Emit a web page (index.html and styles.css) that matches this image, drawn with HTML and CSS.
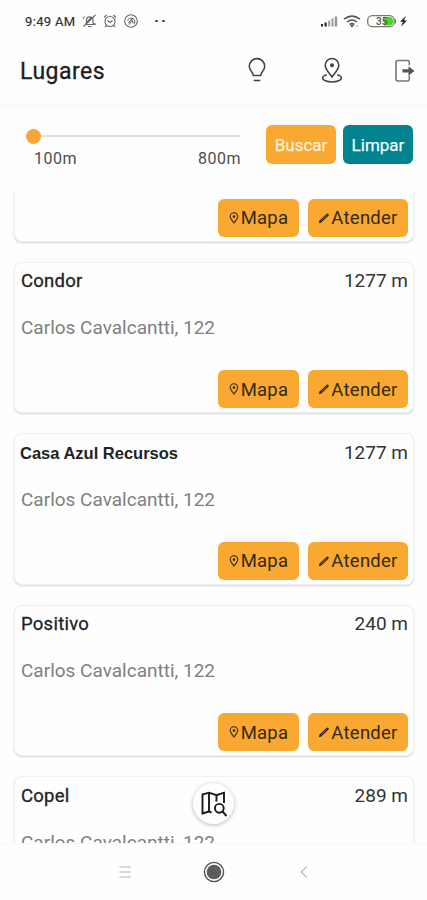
FILE: index.html
```html
<!DOCTYPE html>
<html lang="pt-BR">
<head>
<meta charset="utf-8">
<title>Lugares</title>
<link rel="stylesheet" href="styles.css">
</head>
<body>
<svg class="defs" width="0" height="0">
  <symbol id="pin" viewBox="0 0 10 12"><path d="M5 11C3.200 8.700 1.200 6.600 1.200 4.600a3.800 3.800 0 0 1 7.600 0C8.800 6.600 6.800 8.700 5 11Z" fill="none" stroke="currentColor" stroke-width="1.100"/><circle cx="5" cy="4.600" r="1.300" fill="currentColor"/></symbol>
  <symbol id="pencil" viewBox="0 0 12 12"><path d="M.8 11.200 1.500 8.500 8.500 1.900q1-.8 1.900 0t0 1.800L3.400 10.400Z" fill="currentColor"/><path d="M3.500 8.500 8.300 3.900" stroke="#f9a931" stroke-width=".5"/></symbol>
</svg>
<div class="screen">
  <div class="status">
    <span class="time">9:49 AM</span>
    <svg class="s-icons" width="58" height="16" viewBox="0 0 58 16" fill="none" stroke="#666" stroke-width="1.100">
      <path d="M3.500 11.500h8.500l-1-1.600V6.500a3.400 3.400 0 0 0-6.600 0v3.400ZM6 13.500h3.500M1.500 13.500 13.500 2M1 5.500l1.500-2M12.500 10.500l1.500 1M4 10l5-5"/>
      <circle cx="28" cy="8.500" r="5"/><path d="m25.500 7.500 2.500 2 2.500-2M22 4.500 24.500 2M31.500 2 34 4.500M24.500 12.500 23 14M31.500 12.500l1.500 1.500"/>
      <circle cx="49" cy="8" r="6.300"/><path d="M45.500 7.500a3.800 3.800 0 0 1 7 3M46.500 10l3-3.500 2 4M49.500 8.500l-2.500 3"/>
    </svg>
    <span class="dots"><i></i><i></i></span>
    <svg class="s-right" width="88" height="16" viewBox="0 0 88 16">
      <path d="M0 11h2v2.500H0zM3.500 9.500h2.200v4H3.500z" fill="#222"/><path d="M7.200 7.500h2v6h-2zM10.500 5.500h2v8h-2zM13.700 3.500h2.500v10h-2.500z" fill="#999"/>
      <g fill="none" stroke="#555" stroke-width="1.600"><path d="M23 6.200q8-6.200 16 0M26 9q5-4 10 0M28.700 11.500q2.300-1.800 4.600 0"/></g><path d="m31 14.500-2-2.200h4z" fill="#333"/><path d="M35 13h2.500" stroke="#aaa"/>
      <rect x="46.700" y="2.700" width="26.500" height="11" rx="4.500" fill="#fff" stroke="#777" stroke-width="1.300"/><path d="M63 4h5.500q3.500 0 3.500 4.200t-3.500 4.200H63Z" fill="#48d51b"/><path d="M74.500 6v4.500" stroke="#777"/>
      <text x="55" y="12" class="battery">35</text>
      <path d="m85 2.700-6 6.100h3l-2 5 6-6.300h-3Z" fill="#222"/>
    </svg>
  </div>
  <header class="header">
    <h1>Lugares</h1>
    <div class="actions">
      <svg width="20" height="28" viewBox="0 0 20 28" fill="none" stroke="#444" stroke-width="1.600"><path d="M6.300 18.500c0-3.600-4-4.500-4-9.200a7.700 7.700 0 0 1 15.400 0c0 4.700-4 5.600-4 9.200ZM6.700 23.500h6.600"/></svg>
      <svg width="24" height="28" viewBox="0 0 24 28" fill="none" stroke="#444" stroke-width="1.600"><path d="M12 20C8.500 15.500 5.200 12 5.200 8.300a6.800 6.800 0 0 1 13.600 0C18.800 12 15.500 15.500 12 20Z"/><circle cx="12" cy="8.300" r="2" fill="#444" stroke="none"/><path d="M6.800 17.800C4.200 18.500 2.600 19.600 2.600 21c0 2.200 4.200 4 9.400 4s9.400-1.800 9.400-4c0-1.400-1.600-2.500-4.200-3.200"/></svg>
      <svg width="22" height="28" viewBox="0 0 22 28" fill="none"><path d="M16.300 8.200V5.500q0-2-2-2H5q-2 0-2 2v16.500q0 2 2 2h9.300q2 0 2-2v-3.500" stroke="#777" stroke-width="1.600"/><path d="M9.500 12.300h6V9.200l6 4.800-6 4.700v-3.100h-6Z" fill="#555"/></svg>
    </div>
  </header>
  <section class="filter">
    <div class="slider">
      <div class="track"><span class="knob"></span><span class="rail"></span></div>
      <div class="range"><span>100m</span><span>800m</span></div>
    </div>
    <button class="btn search">Buscar</button>
    <button class="btn clear">Limpar</button>
  </section>
  <main class="list">
    <article class="card">
      <div class="foot"><button class="btn map"><svg width="10" height="12"><use href="#pin"/></svg><span>Mapa</span></button><button class="btn attend"><svg width="12" height="12"><use href="#pencil"/></svg><span>Atender</span></button></div>
    </article>
    <article class="card">
      <div class="top"><h2>Condor</h2><span>1277 m</span></div>
      <p>Carlos Cavalcantti, 122</p>
      <div class="foot"><button class="btn map"><svg width="10" height="12"><use href="#pin"/></svg><span>Mapa</span></button><button class="btn attend"><svg width="12" height="12"><use href="#pencil"/></svg><span>Atender</span></button></div>
    </article>
    <article class="card">
      <div class="top"><h2 class="edited">Casa Azul Recursos</h2><span>1277 m</span></div>
      <p>Carlos Cavalcantti, 122</p>
      <div class="foot"><button class="btn map"><svg width="10" height="12"><use href="#pin"/></svg><span>Mapa</span></button><button class="btn attend"><svg width="12" height="12"><use href="#pencil"/></svg><span>Atender</span></button></div>
    </article>
    <article class="card">
      <div class="top"><h2>Positivo</h2><span>240 m</span></div>
      <p>Carlos Cavalcantti, 122</p>
      <div class="foot"><button class="btn map"><svg width="10" height="12"><use href="#pin"/></svg><span>Mapa</span></button><button class="btn attend"><svg width="12" height="12"><use href="#pencil"/></svg><span>Atender</span></button></div>
    </article>
    <article class="card">
      <div class="top"><h2>Copel</h2><span>289 m</span></div>
      <p>Carlos Cavalcantti, 122</p>
    </article>
    <div class="fab"><svg width="28" height="30" viewBox="0 0 28 30" fill="none" stroke="#1a1a1a" stroke-width="1.900"><path d="M9 22.500 2.500 24.500V5.500L9 3.700l7.500 2.500 7.500-2.500V14M9 4v18.500l2.500 1M16.500 6v6.500"/><circle cx="19.300" cy="19.300" r="4.400"/><path d="m22.500 22.500 4 4.500"/></svg></div>
  </main>
  <nav class="nav">
    <svg width="12" height="14" viewBox="0 0 12 14" stroke="#ccc" stroke-width="1.500"><path d="M.5 2h11M.5 7h11M.5 12h11"/></svg>
    <svg width="22" height="22" viewBox="0 0 22 22"><circle cx="11" cy="11" r="9.600" fill="#fff" stroke="#555" stroke-width="1.400"/><circle cx="11" cy="11" r="7.300" fill="#5c5c5c"/></svg>
    <svg width="8" height="14" viewBox="0 0 8 14" fill="none" stroke="#bbb" stroke-width="1.300"><path d="M7 1.500 1.200 7 7 12.500"/></svg>
  </nav>
</div>
</body>
</html>
```
FILE: styles.css
```css
* { box-sizing: border-box; }
body { margin: 0; background: #fefefe; color: #222; font-family: Roboto, "Liberation Sans", sans-serif; }
h1, h2, p { margin: 0; font-weight: 400; white-space: nowrap; }
svg { display: block; flex: none; }
.defs { display: none; }
.screen { width: 427px; height: 900px; display: flex; flex-direction: column; overflow: hidden; }

.status { height: 42px; flex: none; display: flex; align-items: center; padding: 0 18px 0 25px; }
.time { width: 57px; font-size: 13px; letter-spacing: .35px; color: #333; white-space: nowrap; -webkit-text-stroke: .2px #333; }
.dots { display: flex; gap: 4px; margin-left: 15px; }
.dots i { width: 3px; height: 2px; background: #444; border-radius: 1px; }
.s-right { margin-left: auto; }
.battery { font-size: 10px; font-weight: 500; fill: #555; }

.header { height: 65px; flex: none; display: flex; align-items: center; justify-content: space-between; padding: 0 12px 5px 20px; border-bottom: 3px solid #f9f9f9; }
h1 { font-size: 23px; letter-spacing: .5px; -webkit-text-stroke: .3px #1c1c1c; color: #1c1c1c; padding-top: 2px; }
.actions { display: flex; align-items: center; }
.actions svg:nth-child(2) { margin: 0 49px 0 53px; }

.filter { height: 84px; flex: none; display: flex; align-items: flex-start; padding: 18px 13px 0 26px; }
.slider { width: 215px; margin-right: 25px; }
.track { display: flex; align-items: center; height: 22px; }
.knob { width: 15px; height: 15px; border-radius: 50%; background: #f9a531; }
.rail { width: 199px; height: 2px; background: #dedede; }
.range { display: flex; justify-content: space-between; padding-left: 8px; font-size: 16px; line-height: 24px; letter-spacing: .5px; color: #4d4d4d; }

.btn { display: flex; align-items: center; justify-content: center; flex: none; height: 38px; margin: 0; padding: 0; border: 0; border-radius: 6px; background: #f9a931; color: #33290f; font: 400 18.500px Roboto, sans-serif; letter-spacing: .25px; }
.search, .clear { height: 39px; width: 70px; font-size: 17px; letter-spacing: 0; color: #fff1d8; -webkit-text-stroke: .25px #fff1d8; padding-top: 1px; }
.clear { background: #00838f; color: #f2fbfc; -webkit-text-stroke-color: #f2fbfc; margin-left: 7px; width: 70px; }

.list { position: relative; height: 652px; flex: none; overflow: hidden; padding: 0 13px 0 14px; }
.card { height: 151.500px; margin-bottom: 20px; padding: 5.600px 5px 4px 6px; border: 1px solid #f1f1f1; border-radius: 8px; background: #fefefe; box-shadow: 0 1px 2px #d4d4d4; display: flex; flex-direction: column; }
.card:first-child { margin-top: -101px; }
.top { display: flex; justify-content: space-between; font-size: 19px; line-height: 26px; color: #333; white-space: nowrap; }
h2 { font-size: 18.500px; letter-spacing: .25px; -webkit-text-stroke: .3px #222; color: #222; }
.edited { font-family: "Liberation Sans", sans-serif; font-weight: 700; font-size: 16.500px; letter-spacing: 0; margin-left: -1px; -webkit-text-stroke: 0; }
.card p { margin-top: 21px; font-size: 19px; line-height: 26px; color: #808080; }
.foot { display: flex; justify-content: flex-end; gap: 9px; margin-top: auto; }
.map { width: 81px; }
.attend { width: 100px; }
.map svg { margin-right: 2px; }
.attend svg { margin-right: 1px; }
.foot .btn span { padding-top: 1px; }
.fab { position: absolute; left: 193px; top: 592px; width: 41px; height: 41px; border-radius: 50%; background: #fefefe; box-shadow: 0 1px 4px #bbb; display: flex; align-items: center; justify-content: center; }

.nav { height: 57px; flex: none; border-top: 1px solid #f7f7f7; display: flex; align-items: center; justify-content: space-between; padding: 0 119px; }
.nav svg:nth-child(2) { margin-right: 4px; }
```
